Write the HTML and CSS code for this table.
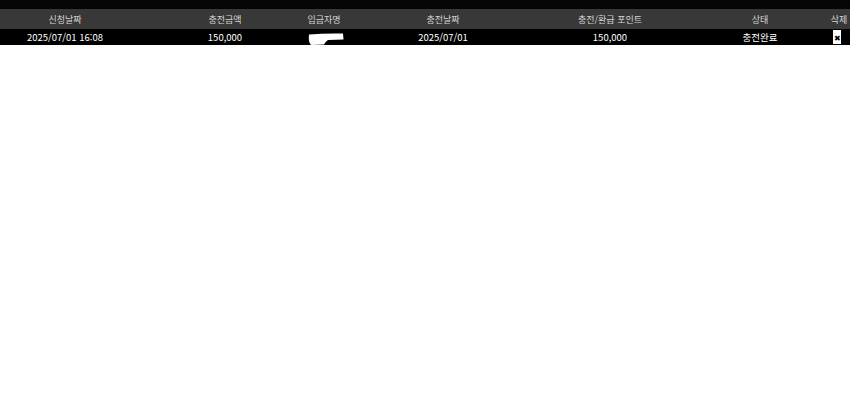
FILE: index.html
```html
<!DOCTYPE html>
<html lang="ko">
<head>
<meta charset="utf-8">
<link rel="stylesheet" href="styles.css">
</head>
<body>
<div class="topbar"></div>
<div class="row head">
  <div class="cell c1">신청날짜</div>
  <div class="cell c2">충전금액</div>
  <div class="cell c3">입금자명</div>
  <div class="cell c4">충전날짜</div>
  <div class="cell c5">충전/환급 포인트</div>
  <div class="cell c6">상태</div>
  <div class="cell c7">삭제</div>
</div>
<div class="row data">
  <div class="cell c1">2025/07/01 16:08</div>
  <div class="cell c2">150,000</div>
  <div class="cell c3"><svg class="redact" width="36" height="12" viewBox="0 0 36 12"><path d="M1 1.5 Q18 0 35 0.5 L35.5 6.5 L20 7 Q17 9 16 11.5 L3 12 Q0 9 1 1.5 Z" fill="#fff"/></svg></div>
  <div class="cell c4">2025/07/01</div>
  <div class="cell c5">150,000</div>
  <div class="cell c6">충전완료</div>
  <div class="cell c7"><span class="del">✖</span></div>
</div>
</body>
</html>
```

FILE: styles.css
```css
html, body {
  margin: 0;
  padding: 0;
  background: #fff;
}
body {
  font-family: "Noto Sans CJK KR", "Noto Sans", sans-serif;
  font-size: 9px;
}
.topbar {
  height: 9px;
  background: #050505;
}
.row {
  display: flex;
  align-items: center;
  white-space: nowrap;
}
.head {
  height: 20px;
  background: #383838;
  color: #d6d6d6;
}
.data {
  height: 16px;
  background: #000;
  color: #fff;
  font-size: 9.5px;
}
.cell {
  display: flex;
  justify-content: center;
  align-items: center;
}
.c1 { width: 130px; }
.c2 { width: 70px; margin-left: 60px; }
.c3 { width: 68px; margin-left: 30px; }
.c4 { width: 80px; margin-left: 45px; }
.c5 { width: 100px; margin-left: 77px; }
.c6 { width: 80px; margin-left: 60px; }
.c7 { width: 22px; margin-left: 28px; }
.redact {
  display: block;
  margin-left: 4px;
  margin-top: 4px;
}
.del {
  display: flex;
  align-items: center;
  justify-content: center;
  width: 8px;
  height: 14px;
  background: #fff;
  color: #000;
  font-size: 8px;
  margin-left: -4px;
}
```
